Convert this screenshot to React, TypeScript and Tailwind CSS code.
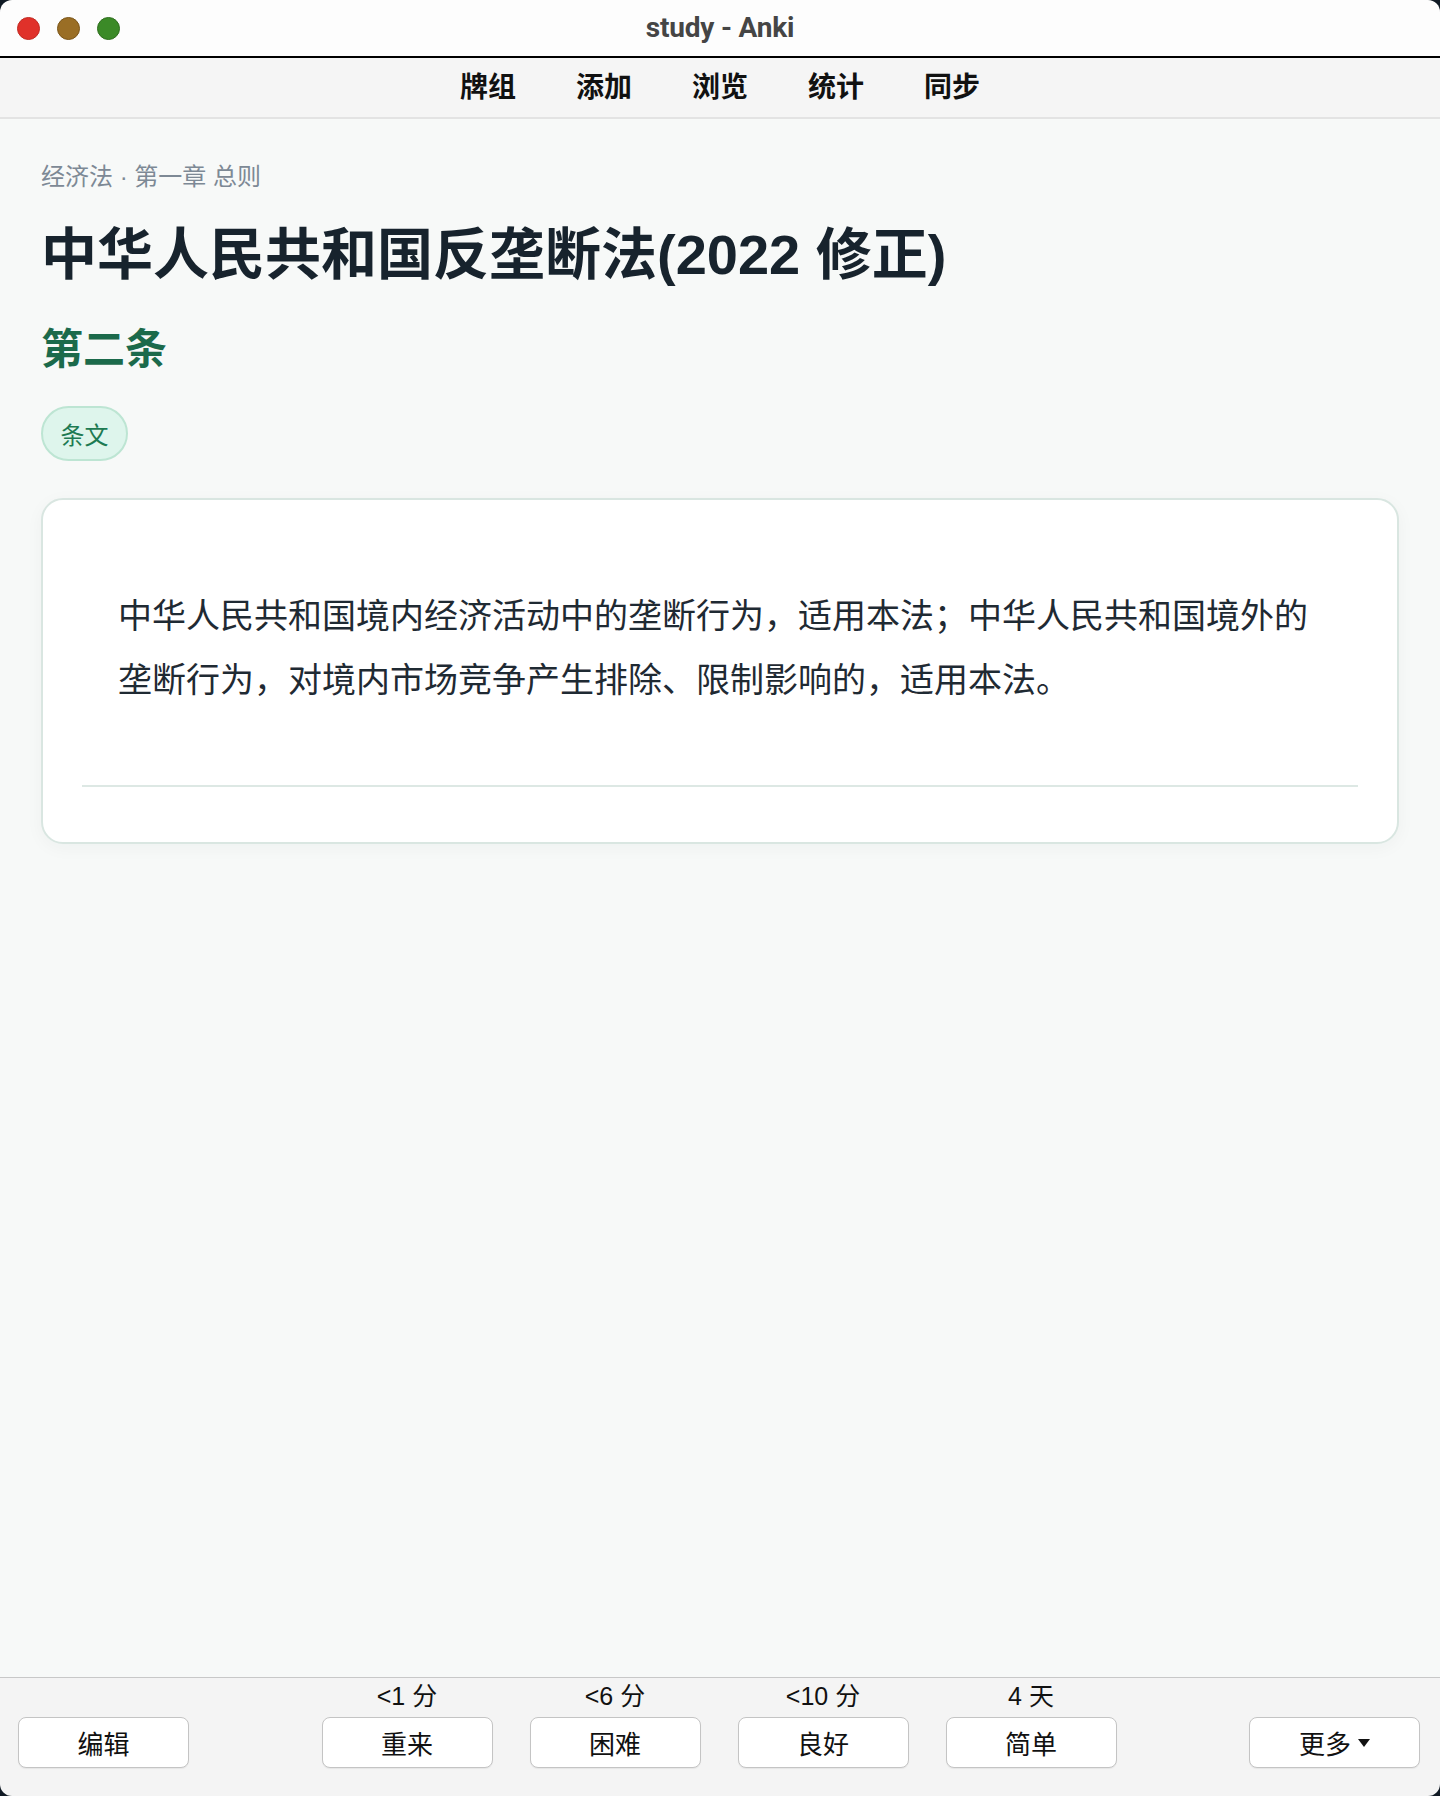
import React from "react";

const CJK = '"Noto Sans CJK SC", "Noto Sans", sans-serif';
const MIX = '"Liberation Sans", "Noto Sans CJK SC", sans-serif';

function AnswerCol({ label, text }: { label: string; text: string }) {
  return (
    <div className="flex flex-col items-center">
      <div className="h-[28px] leading-[28px] text-[25px] text-[#111]" style={{ fontFamily: MIX }}>
        {label}
      </div>
      <button
        className="mt-[7px] w-[171px] h-[51px] rounded-[8px] border border-[#c4c4c4] bg-white shadow-[0_1px_1px_rgba(0,0,0,0.06)] text-[26px] text-[#111] flex items-center justify-center"
        style={{ fontFamily: CJK }}
      >
        {text}
      </button>
    </div>
  );
}

export default function App() {
  return (
    <div className="w-[1440px] h-[1796px] bg-[#101a24]">
      <div className="w-full h-full rounded-[12px] overflow-hidden flex flex-col">
        {/* Title bar */}
        <div className="h-[56px] bg-[#fdfdfd] grid grid-cols-[1fr_auto_1fr] items-center">
          <div className="flex items-center gap-[17px] pl-[17px]">
            <div className="w-[23px] h-[23px] rounded-full bg-[#e0312a] border border-[#c22a22]" />
            <div className="w-[23px] h-[23px] rounded-full bg-[#9a6e25] border border-[#7b5518]" />
            <div className="w-[23px] h-[23px] rounded-full bg-[#3b8a27] border border-[#2e6e1d]" />
          </div>
          <div className="text-[28px] font-bold text-[#454545] tracking-[-0.2px]" style={{ fontFamily: '"Roboto", "Liberation Sans", sans-serif' }}>
            study - Anki
          </div>
          <div />
        </div>
        <div className="h-[2px] bg-black" />
        {/* Toolbar */}
        <div className="h-[61px] bg-[#f5f5f5] border-b-2 border-[#e3e3e3] flex items-center justify-center pb-[5px]">
          {["牌组", "添加", "浏览", "统计", "同步"].map((t) => (
            <div key={t} className="px-[30px] text-[28px] font-bold text-[#111] leading-none" style={{ fontFamily: CJK }}>
              {t}
            </div>
          ))}
        </div>
        {/* Content */}
        <div className="flex-1 bg-[#f7f9f8] px-[41px] pt-[40px]" style={{ fontFamily: CJK }}>
          <div className="text-[24px] leading-[36px] text-[#7d8995]" style={{ fontFamily: MIX }}>经济法 · 第一章 总则</div>
          <h1 className="mt-[26px] text-[56px] leading-[67px] font-bold text-[#17232d]" style={{ fontFamily: MIX }}>
            中华人民共和国反垄断法(2022 修正)
          </h1>
          <h2 className="mt-[33px] text-[42px] leading-[50px] font-bold text-[#1b6a4b]">第二条</h2>
          <div className="mt-[35px] w-[87px] h-[55px] rounded-full bg-[#def5ec] border-2 border-[#bde5d3] flex items-center justify-center text-[24px] text-[#1d7a52]">
            条文
          </div>
          <div className="mt-[37px] w-[1358px] rounded-[22px] border-2 border-[#d9e6e1] bg-white shadow-[0_4px_18px_rgba(20,60,40,0.04)] px-[39px] pb-[55px]">
            <div className="pl-[36px] pr-[38px] pt-[82px] pb-[75px] text-[34px] leading-[64px] text-[#1f2a33]">
              中华人民共和国境内经济活动中的垄断行为，适用本法；中华人民共和国境外的垄断行为，对境内市场竞争产生排除、限制影响的，适用本法。
            </div>
            <div className="h-[2px] bg-[#dde8e4]" />
          </div>
        </div>
        {/* Bottom bar */}
        <div className="h-[119px] bg-[#f4f4f4] border-t border-[#c8c8c8] flex justify-between pl-[18px] pr-[20px] pt-[4px]">
          <AnswerCol label="" text="编辑" />
          <div className="flex gap-[37px]">
            <AnswerCol label="<1 分" text="重来" />
            <AnswerCol label="<6 分" text="困难" />
            <AnswerCol label="<10 分" text="良好" />
            <AnswerCol label="4 天" text="简单" />
          </div>
          <div className="flex flex-col items-center">
            <div className="h-[28px]" />
            <button
              className="mt-[7px] w-[171px] h-[51px] rounded-[8px] border border-[#c4c4c4] bg-white shadow-[0_1px_1px_rgba(0,0,0,0.06)] text-[26px] text-[#111] flex items-center justify-center gap-[7px]"
              style={{ fontFamily: CJK }}
            >
              <span>更多</span>
              <svg width="12" height="8" viewBox="0 0 12 8">
                <path d="M0 0 L12 0 L6 8 Z" fill="#111" />
              </svg>
            </button>
          </div>
        </div>
      </div>
    </div>
  );
}
